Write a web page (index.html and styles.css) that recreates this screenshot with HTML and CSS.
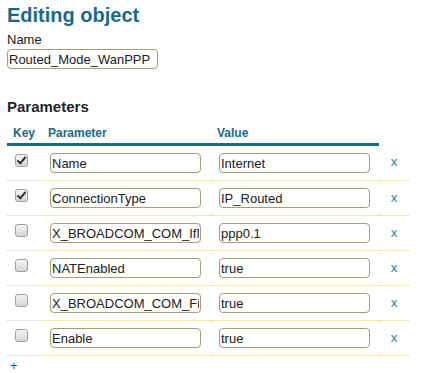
FILE: index.html
```html
<!DOCTYPE html>
<html lang="en">
<head>
    <meta charset="UTF-8">
    <title>Editing object</title>
    <link rel="stylesheet" href="styles.css">
</head>
<body>
    <h1>Editing object</h1>
    <label class="field-label" for="obj-name">Name</label>
    <input class="text-input name-input" id="obj-name" type="text" value="Routed_Mode_WanPPP">

    <h3>Parameters</h3>
    <table class="params">
        <colgroup>
            <col class="col-key">
            <col class="col-param">
            <col class="col-value">
            <col class="col-del">
        </colgroup>
        <thead>
            <tr>
                <th>Key</th>
                <th>Parameter</th>
                <th>Value</th>
                <th class="no-bar"></th>
            </tr>
        </thead>
        <tbody>
            <tr>
                <td class="key-cell"><input type="checkbox" class="key-box" checked></td>
                <td><input class="text-input" type="text" value="Name"></td>
                <td><input class="text-input" type="text" value="Internet"></td>
                <td class="del-cell"><a class="del" href="#">x</a></td>
            </tr>
            <tr>
                <td class="key-cell"><input type="checkbox" class="key-box" checked></td>
                <td><input class="text-input" type="text" value="ConnectionType"></td>
                <td><input class="text-input" type="text" value="IP_Routed"></td>
                <td class="del-cell"><a class="del" href="#">x</a></td>
            </tr>
            <tr>
                <td class="key-cell"><input type="checkbox" class="key-box"></td>
                <td><input class="text-input" type="text" value="X_BROADCOM_COM_IfName"></td>
                <td><input class="text-input" type="text" value="ppp0.1"></td>
                <td class="del-cell"><a class="del" href="#">x</a></td>
            </tr>
            <tr>
                <td class="key-cell"><input type="checkbox" class="key-box"></td>
                <td><input class="text-input" type="text" value="NATEnabled"></td>
                <td><input class="text-input" type="text" value="true"></td>
                <td class="del-cell"><a class="del" href="#">x</a></td>
            </tr>
            <tr>
                <td class="key-cell"><input type="checkbox" class="key-box"></td>
                <td><input class="text-input" type="text" value="X_BROADCOM_COM_FirewallEnabled"></td>
                <td><input class="text-input" type="text" value="true"></td>
                <td class="del-cell"><a class="del" href="#">x</a></td>
            </tr>
            <tr>
                <td class="key-cell"><input type="checkbox" class="key-box"></td>
                <td><input class="text-input" type="text" value="Enable"></td>
                <td><input class="text-input" type="text" value="true"></td>
                <td class="del-cell"><a class="del" href="#">x</a></td>
            </tr>
        </tbody>
    </table>
    <a class="add" href="#">+</a>
</body>
</html>
```

FILE: styles.css
```css
body {
    margin: 0;
    padding: 3px 7px 0;
    font-family: "Liberation Sans", Arial, sans-serif;
    color: #222;
    background: #fff;
}
h1 {
    margin: 0;
    font-size: 20px;
    line-height: 24px;
    color: #19698a;
}
.field-label {
    display: block;
    margin-top: 5px;
    font-size: 13px;
    line-height: 16px;
}
.text-input {
    display: block;
    box-sizing: border-box;
    width: 151px;
    height: 20px;
    margin: 0;
    padding: 0 1px;
    border: 1px solid #a39e74;
    border-radius: 4px;
    background: #fff;
    font-family: "Liberation Sans", Arial, sans-serif;
    font-size: 13px;
    color: #222;
    outline: none;
}
.name-input { margin-top: 1px; }
h3 {
    margin: 29px 0 7px;
    font-size: 15px;
    line-height: 18px;
    color: #1f2427;
}
.params {
    border-collapse: collapse;
    table-layout: fixed;
    width: 402px;
}
.col-key { width: 35px; }
.col-param { width: 169px; }
.col-value { width: 168px; }
.col-del { width: 30px; }
.params th {
    text-align: left;
    font-size: 12px;
    line-height: 14px;
    color: #19698a;
    padding: 3px 0 3px 6px;
    border-bottom: 3px solid #19698a;
}
.params th.no-bar { border-bottom: none; }
.params td {
    padding: 7px 0 7px 8px;
    border-bottom: 1px dotted #e2d98e;
    vertical-align: top;
}
.params td.del-cell {
    padding-left: 0;
    text-align: center;
}
.key-box {
    appearance: none;
    -webkit-appearance: none;
    position: relative;
    display: block;
    width: 13px;
    height: 13px;
    margin: 1px 0 0;
    border: 1px solid #a0a0a0;
    border-radius: 3px;
    background: linear-gradient(#f4f4f4, #d6d6d6);
    box-sizing: border-box;
}
.key-box:checked::after {
    content: "";
    position: absolute;
    left: 3px;
    top: 0;
    width: 3px;
    height: 7px;
    border: solid #333;
    border-width: 0 2px 2px 0;
    transform: rotate(40deg);
}
.del {
    display: block;
    font-size: 13px;
    line-height: 20px;
    color: #1d80b8;
    text-decoration: none;
}
.add {
    display: inline-block;
    margin-left: 3px;
    font-size: 13px;
    line-height: 14px;
    color: #1a5f8a;
    text-decoration: none;
}
```
